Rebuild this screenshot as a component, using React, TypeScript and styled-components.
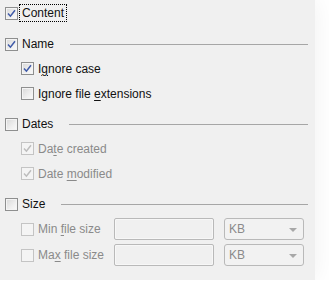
import React from "react";
import styled, { createGlobalStyle, css } from "styled-components";

const GlobalStyle = createGlobalStyle`
  html, body {
    margin: 0;
    padding: 0;
    background: #ffffff;
    overflow: hidden;
  }
  body {
    font-family: "Liberation Sans", Arial, sans-serif;
    font-size: 12px;
  }
`;

const Panel = styled.div`
  width: 315px;
  height: 280px;
  background: #f0f0f0;
  box-shadow: 0 0 24px 0 #f0f0f0;
  box-sizing: border-box;
  padding: 0 7px 0 5px;
  display: flex;
  flex-direction: column;
`;

const Section = styled.div`
  display: flex;
  flex-direction: column;
  margin-top: 6px;
`;

const Row = styled.label<{ $indent?: boolean; $height?: number }>`
  display: flex;
  align-items: center;
  height: ${(p) => p.$height ?? 25}px;
  padding-left: ${(p) => (p.$indent ? 16 : 0)}px;
`;

const Box = styled.span<{ $disabled?: boolean }>`
  width: 13px;
  height: 13px;
  box-sizing: border-box;
  flex: none;
  border: 1px solid ${(p) => (p.$disabled ? "#c4c4c4" : "#8e8f8f")};
  background: ${(p) =>
    p.$disabled
      ? "#f4f4f4"
      : "linear-gradient(135deg, #d8d8d8 0%, #efefef 60%, #fbfbfb 100%)"};
  display: flex;
  align-items: center;
  justify-content: center;
  ${(p) =>
    !p.$disabled &&
    css`
      box-shadow: inset 0 0 0 1px #f4f4f4;
    `}
`;

const Label = styled.span<{ $disabled?: boolean; $focus?: boolean }>`
  margin-left: 4px;
  color: ${(p) => (p.$disabled ? "#8a8a8a" : "#111111")};
  line-height: 14px;
  white-space: nowrap;
  ${(p) =>
    p.$focus &&
    css`
      outline: 1px dotted #000;
      outline-offset: 1px;
      margin-left: 3px;
      padding: 0 1px;
    `}
  u {
    text-decoration-thickness: 1px;
    text-underline-offset: 2px;
  }
`;

const Rule = styled.div`
  flex: 1;
  height: 0;
  border-top: 1px solid #a6a6a6;
  margin-left: 16px;
  margin-top: 1px;
`;

const SizeRow = styled.label`
  display: grid;
  grid-template-columns: 83px 100px 80px;
  column-gap: 10px;
  align-items: center;
  height: 26px;
  padding-left: 16px;
`;

const CheckCell = styled.span`
  display: flex;
  align-items: center;
`;

const Input = styled.div`
  height: 22px;
  box-sizing: border-box;
  border: 1px solid #b9b9b9;
  border-radius: 2px;
  background: #f0f0f0;
  box-shadow: inset 0 0 0 1px #f7f7f7;
`;

const Select = styled.div`
  height: 22px;
  box-sizing: border-box;
  border: 1px solid #b9b9b9;
  border-radius: 3px;
  background: #f2f2f2;
  display: flex;
  align-items: center;
  justify-content: space-between;
  padding: 0 6px 0 4px;
  color: #8a8a8a;
`;

const Arrow = styled.span`
  width: 0;
  height: 0;
  border-left: 4px solid transparent;
  border-right: 4px solid transparent;
  border-top: 4px solid #a8a8a8;
  margin-top: 1px;
`;

function Check({ checked, disabled }: { checked?: boolean; disabled?: boolean }) {
  return (
    <Box $disabled={disabled}>
      {checked && (
        <svg width="9" height="9" viewBox="0 0 9 9">
          <path
            d="M1 4.6 L3.4 7.2 L8 1.2"
            fill="none"
            stroke={disabled ? "#bdbdbd" : "#3f5aa8"}
            strokeWidth="1.5"
          />
        </svg>
      )}
    </Box>
  );
}

function Header({ text, checked }: { text: string; checked?: boolean }) {
  return (
    <Row $height={24}>
      <Check checked={checked} />
      <Label>{text}</Label>
      <Rule />
    </Row>
  );
}

function SizeLimit({ label }: { label: React.ReactNode }) {
  return (
    <SizeRow>
      <CheckCell>
        <Check disabled />
        <Label $disabled>{label}</Label>
      </CheckCell>
      <Input />
      <Select>
        KB
        <Arrow />
      </Select>
    </SizeRow>
  );
}

export default function App() {
  return (
    <>
      <GlobalStyle />
      <Panel>
        <Row $height={26}>
          <Check checked />
          <Label $focus>Content</Label>
        </Row>

        <Section>
          <Header text="Name" checked />
          <Row $indent>
            <Check checked />
            <Label>
              I<u>g</u>nore case
            </Label>
          </Row>
          <Row $indent>
            <Check />
            <Label>
              Ignore file <u>e</u>xtensions
            </Label>
          </Row>
        </Section>

        <Section>
          <Header text="Dates" />
          <Row $indent>
            <Check checked disabled />
            <Label $disabled>
              Da<u>t</u>e created
            </Label>
          </Row>
          <Row $indent>
            <Check checked disabled />
            <Label $disabled>
              Date <u>m</u>odified
            </Label>
          </Row>
        </Section>

        <Section>
          <Header text="Size" />
          <SizeLimit
            label={
              <>
                Min <u>f</u>ile size
              </>
            }
          />
          <SizeLimit
            label={
              <>
                Ma<u>x</u> file size
              </>
            }
          />
        </Section>
      </Panel>
    </>
  );
}
